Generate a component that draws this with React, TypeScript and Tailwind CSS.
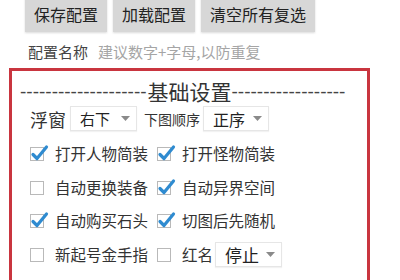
import React from 'react';

const FONT = { fontFamily: '"Noto Sans CJK SC", "Noto Sans", sans-serif' };

const Check: React.FC<{ checked?: boolean }> = ({ checked }) => (
  <div className="relative w-[14px] h-[14px] border border-[#b9b9b9] bg-white shrink-0">
    {checked && (
      <svg className="absolute -left-[1px] -top-[4px]" width="20" height="18" viewBox="0 0 20 18">
        <path d="M3 10.5 L7 14.5 L16.5 3" fill="none" stroke="#2f8bd0" strokeWidth="3.2" strokeLinecap="round" strokeLinejoin="round" />
      </svg>
    )}
  </div>
);

const Option: React.FC<{ checked?: boolean; label: string }> = ({ checked, label }) => (
  <div className="flex items-center gap-[11px]">
    <Check checked={checked} />
    <span className="text-[15.5px] text-[#333] leading-none whitespace-nowrap">{label}</span>
  </div>
);

const Select: React.FC<{ value: string; w: string; text: string }> = ({ value, w, text }) => (
  <div className={`flex items-center justify-between h-[25px] border border-[#e6e6e6] bg-white pl-[9px] pr-[6px] shadow-[0_1px_1px_rgba(0,0,0,0.05)] ${w}`}>
    <span className={`${text} text-[#222] leading-none`}>{value}</span>
    <svg width="9" height="5" viewBox="0 0 9 5">
      <path d="M0 0 L9 0 L4.5 5 Z" fill="#8a8a8a" />
    </svg>
  </div>
);

export default function App() {
  return (
    <div className="w-[400px] h-[280px] overflow-hidden bg-white" style={FONT}>
      <div className="flex gap-[6px] pl-[25px] -mt-[4px]">
        <button className="h-[36px] px-[9px] bg-[#d7d7d7] text-[16px] text-[#222] shadow-[0_1px_2px_rgba(0,0,0,0.15)]">保存配置</button>
        <button className="h-[36px] px-[9px] bg-[#d7d7d7] text-[16px] text-[#222] shadow-[0_1px_2px_rgba(0,0,0,0.15)]">加载配置</button>
        <button className="h-[36px] px-[9px] bg-[#d7d7d7] text-[16px] text-[#222] shadow-[0_1px_2px_rgba(0,0,0,0.15)]">清空所有复选</button>
      </div>

      <div className="flex items-center h-[20px] mt-[9px] pl-[28px] gap-[10px] text-[15px] leading-none">
        <span className="text-[#444]">配置名称</span>
        <span className="text-[#a5a5a5]">建议数字+字母,以防重复</span>
      </div>

      <div className="ml-[9px] mt-[7px] w-[361px] h-[230px] border-[3px] border-[#c9353f] pt-[8px]">
        <div className="flex items-center h-[24px] pl-[8px] text-[#444] whitespace-nowrap">
          <span className="text-[19px] leading-none" style={{ fontFamily: '"Liberation Sans", sans-serif' }}>--------------------</span>
          <span className="text-[21px] leading-none text-[#333] ml-[1px]">基础设置</span>
          <span className="text-[19px] leading-none" style={{ fontFamily: '"Liberation Sans", sans-serif' }}>------------------</span>
        </div>

        <div className="flex items-center mt-[3px] pl-[18px] h-[25px]">
          <span className="text-[18px] text-[#333] leading-none">浮窗</span>
          <div className="ml-[4px]"><Select value="右下" w="w-[67px]" text="text-[15px]" /></div>
          <span className="ml-[7px] text-[14px] text-[#333] leading-none">下图顺序</span>
          <div className="ml-[3px]"><Select value="正序" w="w-[66px]" text="text-[16px]" /></div>
        </div>

        <div className="mt-[11px] pl-[18px] grid grid-cols-[127px_1fr] gap-y-[9.5px]">
          <div className="h-[24px] flex items-center"><Option checked label="打开人物简装" /></div>
          <div className="h-[24px] flex items-center"><Option checked label="打开怪物简装" /></div>
          <div className="h-[24px] flex items-center"><Option label="自动更换装备" /></div>
          <div className="h-[24px] flex items-center"><Option checked label="自动异界空间" /></div>
          <div className="h-[24px] flex items-center"><Option checked label="自动购买石头" /></div>
          <div className="h-[24px] flex items-center"><Option checked label="切图后先随机" /></div>
          <div className="h-[24px] flex items-center"><Option label="新起号金手指" /></div>
          <div className="h-[24px] flex items-center">
            <Check />
            <span className="ml-[11px] text-[15.5px] text-[#333] leading-none">红名</span>
            <div className="ml-[2px]"><Select value="停止" w="w-[67px]" text="text-[17px]" /></div>
          </div>
        </div>
      </div>
    </div>
  );
}
